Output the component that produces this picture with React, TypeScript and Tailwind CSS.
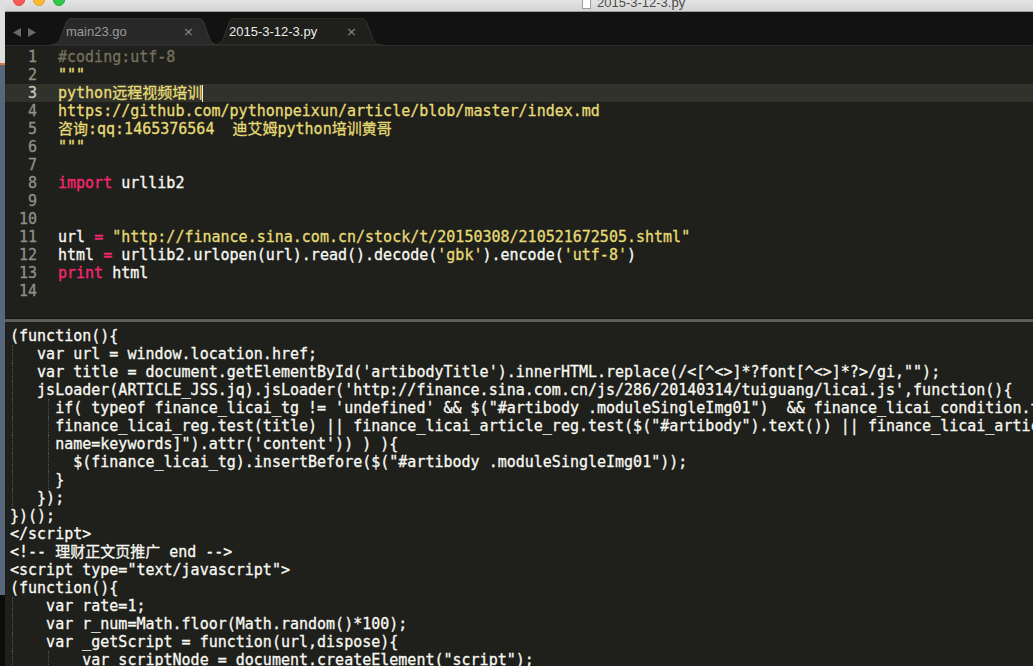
import React from "react";

type Tok = { t: string; c?: "k" | "s" | "cm" };

const topLines: Tok[][] = [
  [{ t: "#coding:utf-8", c: "cm" }],
  [{ t: '"""', c: "s" }],
  [{ t: "python远程视频培训", c: "s" }],
  [{ t: "https://github.com/pythonpeixun/article/blob/master/index.md", c: "s" }],
  [{ t: "咨询:qq:1465376564  迪艾姆python培训黄哥", c: "s" }],
  [{ t: '"""', c: "s" }],
  [],
  [{ t: "import", c: "k" }, { t: " urllib2" }],
  [],
  [],
  [
    { t: "url " },
    { t: "=", c: "k" },
    { t: " " },
    { t: '"http://finance.sina.com.cn/stock/t/20150308/210521672505.shtml"', c: "s" },
  ],
  [
    { t: "html " },
    { t: "=", c: "k" },
    { t: " urllib2.urlopen(url).read().decode(" },
    { t: "'gbk'", c: "s" },
    { t: ").encode(" },
    { t: "'utf-8'", c: "s" },
    { t: ")" },
  ],
  [{ t: "print", c: "k" }, { t: " html" }],
  [],
];

// text + columns where an indent guide is drawn
const outputLines: [string, number[]][] = [
  ["(function(){", []],
  ["   var url = window.location.href;", [0]],
  ["   var title = document.getElementById('artibodyTitle').innerHTML.replace(/<[^<>]*?font[^<>]*?>/gi,\"\");", [0]],
  ["   jsLoader(ARTICLE_JSS.jq).jsLoader('http://finance.sina.com.cn/js/286/20140314/tuiguang/licai.js',function(){", [0]],
  ["     if( typeof finance_licai_tg != 'undefined' && $(\"#artibody .moduleSingleImg01\")  && finance_licai_condition.test(document.title) ||", [0, 4]],
  ["     finance_licai_reg.test(title) || finance_licai_article_reg.test($(\"#artibody\").text()) || finance_licai_article_reg.test($(\"meta[", [0, 4]],
  ["     name=keywords]\").attr('content')) ) ){", [0, 4]],
  ["       $(finance_licai_tg).insertBefore($(\"#artibody .moduleSingleImg01\"));", [0, 4]],
  ["     }", [0, 4]],
  ["   });", [0]],
  ["})();", []],
  ["</script>", []],
  ["<!-- 理财正文页推广 end -->", []],
  ["<script type=\"text/javascript\">", []],
  ["(function(){", []],
  ["    var rate=1;", [0]],
  ["    var r_num=Math.floor(Math.random()*100);", [0]],
  ["    var _getScript = function(url,dispose){", [0]],
  ["        var scriptNode = document.createElement(\"script\");", [0, 4]],
];

const mono = "font-['DejaVu_Sans_Mono','Noto_Sans_CJK_SC',monospace]";

function tokColor(c?: Tok["c"]) {
  if (c === "k") return "text-[#f92672]";
  if (c === "s") return "text-[#e6db74]";
  if (c === "cm") return "text-[#75715e]";
  return "text-[#f8f8f2]";
}

function Tab({ label, active }: { label: string; active?: boolean }) {
  return (
    <div className={`relative w-[170px] h-[27px] shrink-0 ${active ? "z-10 -ml-[7px]" : ""}`}>
      <svg className="absolute inset-0" width="170" height="27" viewBox="0 0 170 27">
        <path
          d="M0 27 C7 27 9 24 11 19 L16 5 C17 2 19 0 23 0 L147 0 C151 0 153 2 154 5 L159 19 C161 24 163 27 170 27 Z"
          fill={active ? "#1f201c" : "#292929"}
          stroke={active ? "#33332f" : "#383838"}
          strokeWidth="1"
        />
      </svg>
      <div className="relative flex items-center h-full pl-[16px] pr-[26px]">
        <span
          className={`flex-1 text-[13px] font-['Liberation_Sans',sans-serif] ${
            active ? "text-[#ececec]" : "text-[#9a9a9a]"
          }`}
        >
          {label}
        </span>
        <span className="text-[13px] text-[#8a8a8a] font-['DejaVu_Sans',sans-serif]">×</span>
      </div>
    </div>
  );
}

export default function App() {
  return (
    <div className="w-[1033px] h-[666px] flex overflow-hidden bg-[#1f201c]">
      {/* window behind */}
      <div className="w-[5px] shrink-0 flex flex-col">
        <div className="h-[63px] bg-[#dedede]" />
        <div className="h-[2px] bg-[#d9793a]" />
        <div className="h-[530px] bg-[#58677b]" />
        <div className="flex-1 bg-[#0b0b0b]" />
      </div>

      <div className="flex-1 flex flex-col min-w-0">
        {/* title bar */}
        <div className="relative h-[11px] bg-gradient-to-b from-[#e4e4e4] to-[#d4d4d4] overflow-hidden">
          <div className="absolute left-[8px] -top-[6px] w-[12px] h-[12px] rounded-full bg-[#fc5b57] border border-[#df4744]" />
          <div className="absolute left-[28px] -top-[6px] w-[12px] h-[12px] rounded-full bg-[#fdbb2e] border border-[#de9f34]" />
          <div className="absolute left-[48px] -top-[6px] w-[12px] h-[12px] rounded-full bg-[#33c748] border border-[#27aa35]" />
          <div className="absolute left-[577px] -top-[4px] flex items-end gap-[6px]">
            <div className="w-[9px] h-[12px] bg-white border border-[#9c9c9c]" />
            <span className="text-[13px] leading-[13px] text-[#4a4a4a] font-['Liberation_Sans',sans-serif]">
              2015-3-12-3.py
            </span>
          </div>
        </div>
        <div className="h-px bg-[#9e9e9e]" />

        {/* tab bar */}
        <div className="h-[33px] bg-[#121212] flex items-end">
          <div className="flex items-center gap-[7px] pl-[8px] pb-[8px] w-[45px]">
            <svg width="8" height="9" viewBox="0 0 8 9">
              <path d="M8 0 L0 4.5 L8 9 Z" fill="#6a6a6a" />
            </svg>
            <svg width="8" height="9" viewBox="0 0 8 9">
              <path d="M0 0 L8 4.5 L0 9 Z" fill="#6a6a6a" />
            </svg>
          </div>
          <Tab label="main23.go" />
          <Tab label="2015-3-12-3.py" active />
        </div>
        <div className="h-px bg-[#2b2b29]" />

        {/* editor */}
        <div
          className={`h-[272px] pt-[2px] ${mono} text-[15px] leading-[18px] overflow-hidden [-webkit-text-stroke:0.3px]`}
        >
          {topLines.map((line, i) => {
            const cur = i === 2;
            return (
              <div key={i} className={`flex h-[18px] whitespace-pre ${cur ? "bg-[#31322c]" : ""}`}>
                <div className={`w-[32px] text-right ${cur ? "text-[#c8c8c2]" : "text-[#8f908a]"}`}>{i + 1}</div>
                <div className="pl-[21px] flex items-center">
                  {line.map((tok, j) => (
                    <span key={j} className={tokColor(tok.c)}>
                      {tok.t}
                    </span>
                  ))}
                  {cur && <span className="w-px h-[17px] bg-[#f8f8f0] [-webkit-text-stroke:0]" />}
                </div>
              </div>
            );
          })}
        </div>

        {/* splitter */}
        <div className="h-px bg-[#151515]" />
        <div className="h-[3px] bg-[#5d5d5b]" />

        {/* output panel */}
        <div
          className={`flex-1 pt-[5px] pl-[5px] ${mono} text-[15px] leading-[18px] text-[#f8f8f2] overflow-hidden [-webkit-text-stroke:0.3px]`}
        >
          {outputLines.map(([l, guides], i) => (
            <div key={i} className="relative h-[18px] whitespace-pre">
              {guides.map((g) => (
                <span
                  key={g}
                  className={`absolute top-0 h-full border-l border-dotted border-[#55554f] ${
                    g === 0 ? "left-[2px]" : "left-[38px]"
                  }`}
                />
              ))}
              {l}
            </div>
          ))}
        </div>
      </div>
    </div>
  );
}
